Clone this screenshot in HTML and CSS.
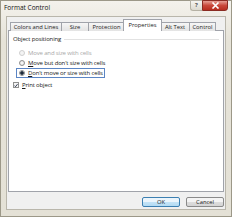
FILE: index.html
```html
<!DOCTYPE html>
<html lang="en">
<head>
    <meta charset="UTF-8">
    <title>Format Control</title>
    <link rel="stylesheet" href="styles.css">
</head>
<body>
    <div class="dialog">
        <div class="titlebar">
            <span class="title">Format Control</span>
            <div class="caption-buttons">
                <span class="help-btn">?</span>
                <span class="close-btn">
                    <svg width="9" height="7" viewBox="0 0 9 7">
                        <path d="M1.5 0.5 L7.5 6.5 M7.5 0.5 L1.5 6.5" stroke="#fff" stroke-width="1.6" fill="none"/>
                    </svg>
                </span>
            </div>
        </div>
        <div class="client">
            <div class="tabs">
                <div class="tab tab-colors">Colors and Lines</div>
                <div class="tab tab-size">Size</div>
                <div class="tab tab-protection">Protection</div>
                <div class="tab tab-properties active">Properties</div>
                <div class="tab tab-alt">Alt Text</div>
                <div class="tab tab-control">Control</div>
            </div>
            <div class="panel">
                <div class="group-title">
                    <span>Object positioning</span>
                </div>
                <div class="options">
                    <label class="option disabled">
                        <span class="radio"></span>
                        <span>Move and size with cells</span>
                    </label>
                    <label class="option">
                        <span class="radio"></span>
                        <span><u>M</u>ove but don't size with cells</span>
                    </label>
                    <label class="option focused">
                        <span class="radio checked"></span>
                        <span><u>D</u>on't move or size with cells</span>
                    </label>
                </div>
                <label class="check-option">
                    <span class="checkbox">
                        <svg width="5" height="5" viewBox="0 0 5 5">
                            <path d="M0.6 2.6 L1.9 4 L4.4 0.8" stroke="#1f2a44" stroke-width="1.1" fill="none"/>
                        </svg>
                    </span>
                    <span><u>P</u>rint object</span>
                </label>
            </div>
            <div class="buttons">
                <button class="btn btn-default">OK</button>
                <button class="btn">Cancel</button>
            </div>
        </div>
    </div>
</body>
</html>
```

FILE: styles.css
```css
html, body {
    margin: 0; padding: 0;
    background: #fff;
}

.dialog {
    width: 232px; height: 217px;
    box-sizing: border-box;
    border: 1px solid #9c9888;
    background: linear-gradient(#f4f2ec, #e6e3d8 40px, #e4e1d6);
    font-family: "Open Sans", "Noto Sans", sans-serif;
    font-size: 6px;
    color: #1a1a1a;
    display: flex;
    flex-direction: column;
}
    .titlebar {
        height: 15px;
        display: flex;
        align-items: flex-start;
        padding-left: 3px;
        box-sizing: border-box;
    }
        .titlebar .title {
            font-size: 6.5px;
            line-height: 13px;
            color: #111;
        }
        .caption-buttons {
            margin-left: auto;
            margin-right: 3px;
            display: flex;
            margin-top: -1px;
        }
            .help-btn {
                width: 12px; height: 11px;
                box-sizing: border-box;
                border: 1px solid #b5b1a4;
                border-right: 0;
                border-radius: 0 0 0 3px;
                background: linear-gradient(#f6f5f1, #dcd9cf);
                color: #555;
                font-size: 6px;
                line-height: 9px;
                text-align: center;
                font-weight: bold;
            }
            .close-btn {
                width: 26px; height: 11px;
                box-sizing: border-box;
                border: 1px solid #8a2b22;
                border-radius: 0 0 3px 0;
                background: linear-gradient(#e7a095, #c9483a 50%, #b72d1f);
                display: flex;
                align-items: center;
                justify-content: center;
            }

    .client {
        flex: 1;
        margin: 0 5px 6px 5px;
        background: #f0f0f0;
        border: 1px solid #b9b6ab;
        padding: 2px 1px 0 1px;
        display: flex;
        flex-direction: column;
    }
        .tabs {
            display: flex;
            align-items: flex-end;
            padding-left: 2px;
            height: 12px;
            position: relative;
            z-index: 1;
            margin-bottom: -1px;
        }
            .tab {
                height: 9px;
                box-sizing: border-box;
                border: 1px solid #a0a3aa;
                border-bottom: 0;
                margin-right: -1px;
                background: linear-gradient(#f6f6f6, #e3e3e3);
                text-align: center;
                line-height: 8px;
                font-size: 5.8px;
                color: #222;
            }
            .tab-colors { width: 52px; }
            .tab-size { width: 28px; }
            .tab-protection { width: 37px; }
            .tab-properties { width: 37px; }
            .tab-alt { width: 30px; }
            .tab-control { width: 27px; }
            .tab.active {
                height: 12px;
                background: #fff;
                line-height: 10px;
                margin-left: -1px;
                margin-right: -2px;
                width: 39px;
                position: relative;
            }

        .panel {
            height: 162px;
            box-sizing: border-box;
            background: #fff;
            border: 1px solid #a0a3aa;
            padding: 4px 4px 0 4px;
            letter-spacing: -0.15px;
        }
            .group-title {
                display: flex;
                align-items: center;
                height: 8px;
                color: #1a1a1a;
            }
                .group-title::after {
                    content: "";
                    flex: 1;
                    height: 1px;
                    margin-left: 3px;
                    background: #e2e2e2;
                }
            .options {
                display: flex;
                flex-direction: column;
                padding: 5px 0 0 3px;
            }
                .option {
                    display: flex;
                    align-items: center;
                    gap: 3px;
                    height: 8px;
                    padding: 0 1px 0 2px;
                    align-self: flex-start;
                    border: 1px solid transparent;
                }
                .option.disabled {
                    color: #a8a8a8;
                }
                .option.focused {
                    border-color: #5b85c4;
                }
                    .radio {
                        width: 6px; height: 6px;
                        box-sizing: border-box;
                        border-radius: 50%;
                        border: 1px solid #8e8f8f;
                        background: radial-gradient(#fefefe, #d8d8d8);
                    }
                    .option.disabled .radio {
                        border-color: #cfcfcf;
                        background: #f4f4f4;
                    }
                    .radio.checked {
                        background: radial-gradient(circle, #1c2a3a 0, #1c2a3a 1.5px, #e0e0e0 2px);
                    }
            .check-option {
                display: flex;
                align-items: center;
                gap: 3px;
                margin-top: 3px;
                height: 8px;
            }
                .checkbox {
                    width: 6px; height: 6px;
                    box-sizing: border-box;
                    border: 1px solid #8e8f8f;
                    background: #f4f4f4;
                    display: flex;
                    align-items: center;
                    justify-content: center;
                }

        .buttons {
            display: flex;
            justify-content: flex-end;
            gap: 6px;
            padding: 5px 0 0 0;
        }
            .btn {
                width: 38px; height: 10px;
                box-sizing: border-box;
                padding: 0;
                border: 1px solid #8a8a8a;
                border-radius: 2px;
                background: linear-gradient(#f4f4f4 45%, #dcdcdc 55%, #d4d4d4);
                font-family: inherit;
                font-size: 5.8px;
                line-height: 8px;
                color: #222;
            }
            .btn-default {
                border-color: #3c7fb1;
                background: linear-gradient(#ebf5fc 45%, #c2e2f6 55%, #b3dbf3);
            }
```
